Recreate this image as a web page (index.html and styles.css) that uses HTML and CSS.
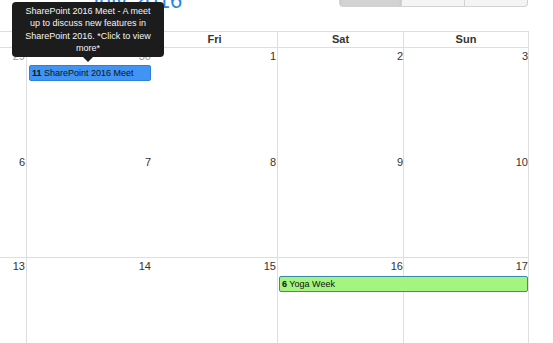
FILE: index.html
```html
<!DOCTYPE html>
<html>
<head>
	<title>Calendar</title>
	<meta charset="UTF-8">
	<meta name="viewport" content="width=device-width, initial-scale=1.0">
	<link rel="stylesheet" href="styles.css">
</head>
<body>
	<div class="page">
		<div class="toolbar">
			<h2 class="title">July 2016</h2>
			<div class="btn-group">
				<button class="btn active">month</button>
				<button class="btn">week</button>
				<button class="btn">day</button>
			</div>
		</div>

		<div class="month">
			<!-- day names -->
			<div class="week head">
				<div class="cell c1">Wed</div>
				<div class="cell c2 open">Thu</div>
				<div class="cell c3">Fri</div>
				<div class="cell c4">Sat</div>
				<div class="cell c5">Sun</div>
			</div>

			<!-- week 1 -->
			<div class="week first">
				<div class="bg c1"></div>
				<div class="bg c2 open"></div>
				<div class="bg c3"></div>
				<div class="bg c4"></div>
				<div class="bg c5"></div>
				<span class="num c1 other">29</span>
				<span class="num c2 other">30</span>
				<span class="num c3">1</span>
				<span class="num c4">2</span>
				<span class="num c5">3</span>
				<div class="event blue c2"><b>11</b> SharePoint 2016 Meet</div>
			</div>

			<!-- week 2 -->
			<div class="week second">
				<div class="bg c1"></div>
				<div class="bg c2 open"></div>
				<div class="bg c3"></div>
				<div class="bg c4"></div>
				<div class="bg c5"></div>
				<span class="num c1">6</span>
				<span class="num c2">7</span>
				<span class="num c3">8</span>
				<span class="num c4">9</span>
				<span class="num c5">10</span>
			</div>

			<!-- week 3 -->
			<div class="week third">
				<div class="bg c1"></div>
				<div class="bg c2 open"></div>
				<div class="bg c3"></div>
				<div class="bg c4"></div>
				<div class="bg c5"></div>
				<span class="num c1">13</span>
				<span class="num c2">14</span>
				<span class="num c3">15</span>
				<span class="num c4">16</span>
				<span class="num c5">17</span>
				<div class="event green span-sat-sun"><b>6</b> Yoga Week</div>
			</div>
		</div>

		<div class="tooltip">
			SharePoint 2016 Meet - A meet<br>
			up to discuss new features in<br>
			SharePoint 2016. *Click to view<br>
			more*
		</div>
	</div>
</body>
</html>
```

FILE: styles.css
```css
body {
	margin: 0;
	font-family: "Liberation Sans", Arial, sans-serif;
	background-color: #fff;
}
.page {
	position: relative;
	width: 554px;
	height: 343px;
	overflow: hidden;
	border-right: 1px solid #cfcfcf;
	box-sizing: border-box;
}

/* toolbar */
.toolbar {
	display: flex;
	height: 31px;
}
.title {
	margin: -10px 0 0 88px;
	font-size: 22px;
	line-height: 22px;
	font-weight: normal;
	color: #2589dc;
}
.btn-group {
	display: flex;
	margin: -21px 25px 0 auto;
	height: 28px;
}
.btn {
	width: 63px;
	height: 28px;
	border: 1px solid #d2d2d2;
	border-left: none;
	background-color: #f4f4f4;
	color: #fff;
	font-family: "Liberation Sans", Arial, sans-serif;
	font-size: 12px;
	padding: 0;
}
.btn:first-child {
	border-left: 1px solid #d2d2d2;
	border-radius: 0 0 0 4px;
}
.btn:last-child {
	border-radius: 0 0 4px 0;
}
.btn.active {
	background-color: #d3d3d3;
	box-shadow: inset 0 2px 3px rgba(0, 0, 0, 0.1);
}

/* month grid */
.month {
	width: 628px;
	margin-left: -99px;
}
.week {
	display: grid;
	grid-template-columns: 126px 125px 126px 126px 125px;
	grid-template-rows: 17px 16px 1fr;
}
.c1 { grid-column: 1; }
.c2 { grid-column: 2; }
.c3 { grid-column: 3; }
.c4 { grid-column: 4; }
.c5 { grid-column: 5; }

.head {
	grid-template-rows: 15px;
	border-top: 1px solid #dedede;
	border-bottom: 1px solid #dedede;
}
.head .cell {
	border-right: 1px solid #dedede;
	text-align: center;
	font-size: 11px;
	font-weight: bold;
	line-height: 15px;
	color: #333;
}
.head .open {
	border-right: none;
}

.first {
	height: 106px;
}
.second {
	height: 104px;
	box-sizing: border-box;
	border-bottom: 1px solid #dedede;
}
.third {
	height: 100px;
}

.bg {
	grid-row: 1 / -1;
	border-right: 1px solid #dedede;
}
.bg.open {
	border-right: none;
}
.num {
	grid-row: 1;
	text-align: right;
	padding: 2px 1px 0 0;
	font-size: 11px;
	line-height: 13px;
	color: #333;
}
.c1.num, .c3.num {
	padding-right: 2px;
}
.num.other {
	color: #9a9a9a;
}

/* events */
.event {
	grid-row: 2;
	margin: 0 1px 0 2px;
	height: 16px;
	box-sizing: border-box;
	padding-left: 2px;
	border-radius: 2px;
	font-size: 9px;
	line-height: 14px;
	color: #111;
	white-space: nowrap;
	overflow: hidden;
}
.event.blue {
	background-color: #3f94f4;
	border: 1px solid #2f80dc;
}
.event.green {
	background-color: #a3f57f;
	border: 1px solid #3a87ad;
}
.span-sat-sun {
	grid-column: 4 / 6;
	margin-left: 1px;
	margin-top: 1px;
}

/* tooltip over the grid */
.tooltip {
	position: absolute;
	left: 12px;
	top: 2px;
	width: 152px;
	height: 55px;
	box-sizing: border-box;
	padding: 3px 4px;
	background-color: #1c1c1c;
	border-radius: 4px;
	color: #f4f4f4;
	font-size: 9px;
	line-height: 12.3px;
	text-align: center;
}
.tooltip::after {
	content: "";
	position: absolute;
	left: 71px;
	top: 100%;
	border-left: 5px solid transparent;
	border-right: 5px solid transparent;
	border-top: 5px solid #1c1c1c;
}
```
